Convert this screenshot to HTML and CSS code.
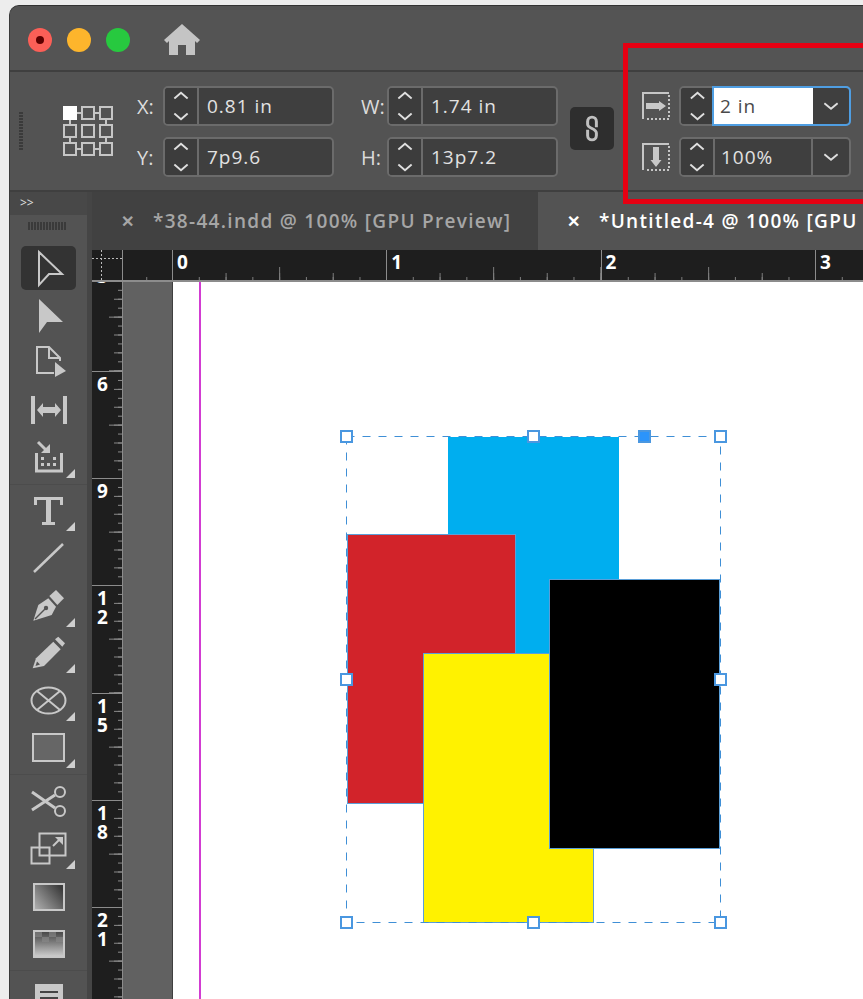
FILE: index.html
```html
<!DOCTYPE html>
<html lang="en">
  <head>
    <meta charset="UTF-8" />
    <meta name="viewport" content="width=device-width, initial-scale=1.0" />
    <title>Untitled-4 @ 100% [GPU Preview]</title>
    <link rel="stylesheet" href="styles.css">
  </head>
  <body>
    <svg class="defs" width="0" height="0">
      <symbol id="updown" viewBox="0 0 32 38">
        <path d="M9 11 L16 5 L23 11 M9 27 L16 33 L23 27" fill="none" stroke="#dedede" stroke-width="2" />
      </symbol>
      <symbol id="caret" viewBox="0 0 36 38">
        <path d="M11 16 L18 22 L25 16" fill="none" stroke="#dedede" stroke-width="2" />
      </symbol>
      <symbol id="corner" viewBox="0 0 9 9">
        <path d="M9 0 V9 H0 Z" fill="#cfcfcf" />
      </symbol>
    </svg>

    <div class="window">
      <header class="titlebar">
        <span class="light light-red"></span>
        <span class="light light-yellow"></span>
        <span class="light light-green"></span>
        <svg class="home" width="36" height="32" viewBox="0 0 36 32">
          <path d="M18 0 L36 16 L33 19 L31 17 V31 H22 V21 H14 V31 H5 V17 L3 19 L0 16 Z" fill="#c4c4c4" />
        </svg>
      </header>

      <!-- control panel -->
      <section class="controls">
        <div class="grip-v"></div>
        <svg class="proxy" width="50" height="50" viewBox="0 0 50 50">
          <g fill="none" stroke="#c6c6c6" stroke-width="2">
            <path d="M13 7 H19 M31 7 H37 M13 43 H19 M31 43 H37 M7 13 V19 M7 31 V37 M43 13 V19 M43 31 V37" />
            <rect x="19" y="1" width="12" height="12" />
            <rect x="37" y="1" width="12" height="12" />
            <rect x="1" y="19" width="12" height="12" />
            <rect x="19" y="19" width="12" height="12" />
            <rect x="37" y="19" width="12" height="12" />
            <rect x="1" y="37" width="12" height="12" />
            <rect x="19" y="37" width="12" height="12" />
            <rect x="37" y="37" width="12" height="12" />
          </g>
          <rect x="0" y="0" width="14" height="14" fill="#fff" />
        </svg>

        <div class="xform xform-pos">
          <label>X:</label>
          <div class="field"><svg class="stepper"><use href="#updown" /></svg><span class="value">0.81 in</span></div>
          <label>Y:</label>
          <div class="field"><svg class="stepper"><use href="#updown" /></svg><span class="value">7p9.6</span></div>
        </div>

        <div class="xform xform-size">
          <label>W:</label>
          <div class="field"><svg class="stepper"><use href="#updown" /></svg><span class="value">1.74 in</span></div>
          <label>H:</label>
          <div class="field"><svg class="stepper"><use href="#updown" /></svg><span class="value">13p7.2</span></div>
        </div>

        <button class="link-btn">
          <svg width="14" height="27" viewBox="0 0 16 30">
            <path d="M13 13.500 V7 A5 5 0 0 0 3 7 V10 C3 15 13 15 13 20 V23 A5 5 0 0 1 3 23 V16.500" fill="none" stroke="#c0c0c0" stroke-width="3.400" />
          </svg>
        </button>

        <div class="scale">
          <svg width="28" height="28" viewBox="0 0 28 28">
            <path d="M1 27 V1 H27" fill="none" stroke="#c6c6c6" stroke-width="2" />
            <path d="M27 3 V27 H3" fill="none" stroke="#c6c6c6" stroke-width="2" stroke-dasharray="2 2" />
            <path d="M4 11 H17 V9 L24 14 L17 19 V17 H4 Z" fill="#c8c8c8" />
          </svg>
          <div class="field combo combo-active"><svg class="stepper"><use href="#updown" /></svg><span class="value">2 in</span><svg class="drop"><use href="#caret" /></svg></div>
          <svg width="28" height="28" viewBox="0 0 28 28">
            <path d="M1 27 V1 H27" fill="none" stroke="#c6c6c6" stroke-width="2" />
            <path d="M27 3 V27 H3" fill="none" stroke="#c6c6c6" stroke-width="2" stroke-dasharray="2 2" />
            <path d="M11 4 H17 V17 H19.500 L14 24 L8.500 17 H11 Z" fill="#c8c8c8" />
          </svg>
          <div class="field combo"><svg class="stepper"><use href="#updown" /></svg><span class="value">100%</span><svg class="drop"><use href="#caret" /></svg></div>
        </div>
      </section>

      <div class="workspace">
        <!-- tools panel -->
        <aside class="tools">
          <div class="tools-head">&gt;&gt;</div>
          <div class="grip-h"></div>
          <div class="tool-group">
            <div class="tool tool-active">
              <svg width="60" height="47" viewBox="0 0 60 47"><path d="M20 8 L43 30 H30 L20 41 Z" fill="none" stroke="#c8c8c8" stroke-width="2" /></svg>
            </div>
            <div class="tool">
              <svg width="60" height="47" viewBox="0 0 60 47"><path d="M20 8 L44 31 H28 L20 42 Z" fill="#c8c8c8" /></svg>
            </div>
            <div class="tool">
              <svg width="60" height="47" viewBox="0 0 60 47">
                <path d="M35 35 H18 V9 H30 L41 20 V23 M30 9 V20 H41" fill="none" stroke="#c8c8c8" stroke-width="2" />
                <path d="M36 24 L47 33 L36 39 Z" fill="#c8c8c8" />
              </svg>
            </div>
            <div class="tool">
              <svg width="60" height="47" viewBox="0 0 60 47">
                <path d="M12 11 H16 V39 H12 Z M44 11 H48 V39 H44 Z M18 25 L24 18 V22 H36 V18 L42 25 L36 32 V28 H24 V32 Z" fill="#c8c8c8" />
              </svg>
            </div>
            <div class="tool">
              <svg width="60" height="47" viewBox="0 0 60 47">
                <path d="M17.500 21 V39 H42.500 V21" fill="none" stroke="#c8c8c8" stroke-width="3" />
                <path d="M19 10 L27 18" stroke="#c8c8c8" stroke-width="3" />
                <path d="M31 12 V21 H22 Z" fill="#c8c8c8" />
                <path d="M22 25 h3 v3 h-3 Z M34 25 h3 v3 h-3 Z M22 31 h3 v3 h-3 Z M28 31 h3 v3 h-3 Z M34 31 h3 v3 h-3 Z" fill="#c8c8c8" />
                <use href="#corner" x="47" y="37" width="9" height="9" />
              </svg>
            </div>
          </div>
          <div class="tool-group">
            <div class="tool">
              <svg width="60" height="47" viewBox="0 0 60 47">
                <path d="M15 10 H44 V18 H41 V13 H32 V35 H36 V38 H23 V35 H27 V13 H18 V18 H15 Z" fill="#c8c8c8" />
                <use href="#corner" x="47" y="35" width="9" height="9" />
              </svg>
            </div>
            <div class="tool">
              <svg width="60" height="47" viewBox="0 0 60 47"><path d="M44 10 L15 38" stroke="#c8c8c8" stroke-width="2.500" /></svg>
            </div>
            <div class="tool">
              <svg width="60" height="47" viewBox="0 0 60 47">
                <path d="M30.300 15 L37 9 L45 17.300 L38.300 24 Z" fill="#c8c8c8" />
                <path d="M14.300 39.700 L19.300 24 L29.300 17.300 L37 25.700 L32.700 34 Z" fill="#c8c8c8" />
                <path d="M16 38 L26 28" stroke="#535353" stroke-width="1.500" />
                <circle cx="27" cy="27" r="2.200" fill="#535353" />
                <use href="#corner" x="47" y="37" width="9" height="9" />
              </svg>
            </div>
            <div class="tool">
              <svg width="60" height="47" viewBox="0 0 60 47">
                <path d="M36 11.300 L39.300 8.700 L46 15.300 L43.300 18.700 Z" fill="#c8c8c8" />
                <path d="M13.700 40.300 L17 30.300 L34.300 13.700 L41.700 21.300 L25 38 Z" fill="#c8c8c8" />
                <path d="M16.500 38 L18 33.500 L21 36.500 Z" fill="#535353" />
                <use href="#corner" x="47" y="36" width="9" height="9" />
              </svg>
            </div>
            <div class="tool">
              <svg width="60" height="47" viewBox="0 0 60 47">
                <ellipse cx="29.500" cy="25.500" rx="17" ry="13" fill="none" stroke="#c8c8c8" stroke-width="2" />
                <path d="M18 16 L41 35 M41 16 L18 35" stroke="#c8c8c8" stroke-width="2" />
                <use href="#corner" x="47" y="37" width="9" height="9" />
              </svg>
            </div>
            <div class="tool">
              <svg width="60" height="47" viewBox="0 0 60 47">
                <rect x="14" y="12" width="31" height="27" fill="#666" stroke="#c8c8c8" stroke-width="2" />
                <use href="#corner" x="47" y="37" width="9" height="9" />
              </svg>
            </div>
          </div>
          <div class="tool-group">
            <div class="tool">
              <svg width="60" height="47" viewBox="0 0 60 47">
                <circle cx="41" cy="15" r="5" fill="none" stroke="#c8c8c8" stroke-width="2" />
                <circle cx="41" cy="34" r="5" fill="none" stroke="#c8c8c8" stroke-width="2" />
                <path d="M13 15 L36 31 M13 33 L36 18" stroke="#c8c8c8" stroke-width="3" />
              </svg>
            </div>
            <div class="tool">
              <svg width="60" height="47" viewBox="0 0 60 47">
                <rect x="20.500" y="9.500" width="26" height="22" fill="none" stroke="#c8c8c8" stroke-width="2" />
                <rect x="12.500" y="23.500" width="18" height="16" fill="none" stroke="#c8c8c8" stroke-width="2" />
                <path d="M34 22 L41 15" stroke="#c8c8c8" stroke-width="2" />
                <path d="M36 13 H44 V21 Z" fill="#c8c8c8" />
                <use href="#corner" x="47" y="36" width="9" height="9" />
              </svg>
            </div>
            <div class="tool">
              <svg width="60" height="47" viewBox="0 0 60 47">
                <defs>
                  <linearGradient id="gradswatch" x1="0" y1="1" x2="1" y2="0.300">
                    <stop offset="0" stop-color="#b4b4b4" />
                    <stop offset="1" stop-color="#3c3c3c" />
                  </linearGradient>
                </defs>
                <rect x="15" y="13" width="30" height="26" fill="url(#gradswatch)" stroke="#c8c8c8" stroke-width="2" />
              </svg>
            </div>
            <div class="tool">
              <svg width="60" height="47" viewBox="0 0 60 47">
                <defs>
                  <linearGradient id="featherswatch" x1="0" y1="0" x2="0" y2="1">
                    <stop offset="0" stop-color="#444" />
                    <stop offset="0.400" stop-color="#777" />
                    <stop offset="1" stop-color="#d0d0d0" />
                  </linearGradient>
                </defs>
                <rect x="15" y="13" width="30" height="26" fill="url(#featherswatch)" stroke="#c8c8c8" stroke-width="2" />
                <path d="M16 14 h7 v5 h-7 Z M30 14 h7 v5 h-7 Z M23 19 h7 v5 h-7 Z M37 19 h7 v5 h-7 Z" fill="#8a8a8a" opacity="0.600" />
              </svg>
            </div>
          </div>
          <div class="tool-group">
            <div class="tool">
              <svg width="60" height="47" viewBox="0 0 60 47">
                <rect x="16" y="11" width="28" height="30" fill="#c8c8c8" />
                <path d="M21 19 H39 M21 25 H39" stroke="#444" stroke-width="2" />
              </svg>
            </div>
          </div>
        </aside>

        <div class="doc-area">
          <nav class="tabs">
            <div class="tab">
              <span class="tab-close">✕</span><span class="tab-name">*38-44.indd @ 100% [GPU Preview]</span>
            </div>
            <div class="tab tab-active">
              <span class="tab-close">✕</span><span class="tab-name">*Untitled-4 @ 100% [GPU Preview]</span>
            </div>
          </nav>

          <div class="hruler">
            <div class="ruler-corner"></div>
            <div class="hcell hcell-lead"></div>
            <div class="hcell">0</div>
            <div class="hcell">1</div>
            <div class="hcell">2</div>
            <div class="hcell">3</div>
          </div>

          <div class="doc-body">
            <div class="vruler">
              <div class="vcell">3</div>
              <div class="vcell">6</div>
              <div class="vcell">9</div>
              <div class="vcell">1<br />2</div>
              <div class="vcell">1<br />5</div>
              <div class="vcell">1<br />8</div>
              <div class="vcell">2<br />1</div>
            </div>
            <div class="pasteboard"></div>

            <!-- the spread: frames sit at their own coordinates -->
            <div class="page">
              <div class="margin-guide"></div>
              <div class="frame frame-cyan"></div>
              <div class="frame frame-red"></div>
              <div class="frame frame-yellow"></div>
              <div class="frame frame-black"></div>
              <svg class="selection" width="376" height="488" viewBox="0 0 376 488">
                <rect x="0.500" y="0.500" width="374" height="486" fill="none" stroke="#3f8fd6" stroke-width="1" stroke-dasharray="8 8" />
              </svg>
              <span class="handle h-tl"></span>
              <span class="handle h-tc"></span>
              <span class="handle h-tr"></span>
              <span class="handle h-ml"></span>
              <span class="handle h-mr"></span>
              <span class="handle h-bl"></span>
              <span class="handle h-bc"></span>
              <span class="handle h-br"></span>
              <span class="handle h-port"></span>
            </div>
          </div>
        </div>
      </div>
    </div>

    <div class="callout"></div>
  </body>
</html>
```

FILE: styles.css
```css
html,
body {
  margin: 0;
  padding: 0;
  height: 999px;
  overflow: hidden;
}
body {
  position: relative;
  background-color: #ededed;
  font-family: "Open Sans", Arial, sans-serif;
  color: #e6e6e6;
}
.defs {
  position: absolute;
}

.window {
  margin: 5px 0 0 9px;
  height: 994px;
  display: flex;
  flex-direction: column;
  background-color: #535353;
  border-top: 1px solid #333;
  border-left: 1px solid #3a3a3a;
  border-top-left-radius: 10px;
  overflow: hidden;
  box-sizing: border-box;
}

/* title bar */
.titlebar {
  flex: none;
  height: 66px;
  display: flex;
  align-items: center;
  box-sizing: border-box;
  padding: 4px 0 0 18px;
  gap: 15px;
  background-color: #545454;
  border-bottom: 2px solid #3f3f3f;
}
.light {
  width: 24px;
  height: 24px;
  border-radius: 50%;
  position: relative;
}
.light-red {
  background-color: #fc5f57;
}
.light-red::after {
  content: "";
  position: absolute;
  left: 8px;
  top: 8px;
  width: 8px;
  height: 8px;
  border-radius: 50%;
  background-color: #5e0000;
}
.light-yellow {
  background-color: #fdb52c;
}
.light-green {
  background-color: #27c93f;
}
.home {
  margin-left: 19px;
}

/* control panel */
.controls {
  flex: none;
  height: 120px;
  display: flex;
  box-sizing: border-box;
  padding-top: 14px;
  background-color: #535353;
  border-bottom: 2px solid #3f3f3f;
}
.grip-v {
  width: 4px;
  height: 38px;
  margin: 26px 0 0 9px;
  background: repeating-linear-gradient(to bottom, #3a3a3a 0 2px, transparent 2px 3px);
}
.proxy {
  margin: 20px 0 0 40px;
}
.xform {
  display: grid;
  grid-template-columns: 26px 171px;
  grid-auto-rows: 40px;
  row-gap: 11px;
  align-items: center;
}
.xform-pos {
  margin-left: 24px;
}
.xform-size {
  margin-left: 27px;
}
.xform label {
  font-size: 20px;
  color: #dcdcdc;
}
.field {
  height: 40px;
  display: flex;
  box-sizing: border-box;
  background-color: #3f3f3f;
  border: 2px solid #6b6b6b;
  border-radius: 5px;
  overflow: hidden;
}
.stepper {
  flex: none;
  width: 32px;
  height: 36px;
  border-right: 2px solid #6b6b6b;
  background-color: #3c3c3c;
}
.value {
  flex: 1;
  padding-left: 8px;
  font-size: 19px;
  line-height: 36px;
  letter-spacing: 1px;
  color: #e2e2e2;
  white-space: nowrap;
}
.link-btn {
  width: 44px;
  height: 43px;
  margin: 21px 0 0 12px;
  padding: 0;
  display: flex;
  align-items: center;
  justify-content: center;
  background-color: #2e2e2e;
  border: 0;
  border-radius: 5px;
}
.scale {
  display: grid;
  grid-template-columns: 28px 172px;
  grid-auto-rows: 40px;
  row-gap: 11px;
  column-gap: 9px;
  align-items: center;
  margin-left: 28px;
}
.combo .value {
  padding-left: 6px;
  border-right: 2px solid #6b6b6b;
}
.combo .drop {
  flex: none;
  width: 36px;
  height: 36px;
}
.combo-active {
  position: relative;
  overflow: visible;
}
.combo-active::after {
  content: "";
  position: absolute;
  left: 31px;
  top: -2px;
  right: -2px;
  bottom: -2px;
  border: 2px solid #4f9ee2;
  border-radius: 0 5px 5px 0;
}
.combo-active .stepper {
  border-right: 0;
  width: 33px;
  border-radius: 3px 0 0 3px;
}
.combo-active .value {
  background-color: #fff;
  color: #4a4a4a;
  border-right: 0;
}

/* lower part of the window */
.workspace {
  flex: 1;
  min-height: 0;
  display: flex;
}
.tools {
  flex: none;
  width: 77px;
  background-color: #535353;
  border-right: 5px solid #454545;
  overflow: hidden;
}
.tools-head {
  height: 23px;
  padding-left: 10px;
  box-sizing: border-box;
  font-size: 12px;
  line-height: 21px;
  background-color: #484848;
  color: #e0e0e0;
}
.grip-h {
  height: 29px;
  position: relative;
}
.grip-h::after {
  content: "";
  position: absolute;
  left: 18px;
  top: 7px;
  width: 38px;
  height: 8px;
  background: repeating-linear-gradient(to right, #3a3a3a 0 2px, transparent 2px 3px);
}
.tool-group {
  padding-bottom: 5px;
  margin-bottom: 2px;
  border-bottom: 1px solid #4c4c4c;
}
.tool {
  height: 47px;
  display: flex;
  justify-content: center;
  position: relative;
}
.tool svg {
  position: relative;
}
.tool-active::before {
  content: "";
  position: absolute;
  left: 11px;
  right: 11px;
  top: 2px;
  bottom: 1px;
  background-color: #333;
  border-radius: 5px;
}

.doc-area {
  flex: 1;
  min-width: 0;
  display: flex;
  flex-direction: column;
}
.tabs {
  flex: none;
  height: 58px;
  display: flex;
  background-color: #414141;
}
.tab {
  display: flex;
  align-items: center;
  flex: none;
  width: 446px;
  box-sizing: border-box;
  padding-left: 29px;
  font-size: 19px;
  font-weight: 600;
  color: #a6a6a6;
  white-space: nowrap;
  overflow: hidden;
}
.tab-active {
  flex: 1;
  min-width: 0;
  background-color: #535353;
  color: #fff;
}
.tab-close {
  flex: none;
  width: 32px;
  font-size: 16px;
}
.tab-name {
  flex: none;
  letter-spacing: 1.3px;
}

/* rulers */
.hruler {
  flex: none;
  height: 30px;
  display: flex;
  background-color: #1e1e1e;
  border-bottom: 2px solid #8c8c8c;
  box-sizing: content-box;
  overflow: hidden;
}
.ruler-corner {
  flex: none;
  width: 30px;
  border-right: 1px solid #8c8c8c;
  background:
    linear-gradient(to right, #bbb 50%, transparent 50%) 0 8px / 4px 1px repeat-x,
    linear-gradient(to bottom, #bbb 50%, transparent 50%) 9px 0 / 1px 4px repeat-y;
  background-color: #1e1e1e;
}
.hcell {
  flex: none;
  width: 214.3px;
  box-sizing: border-box;
  padding-left: 4px;
  font-size: 19px;
  font-weight: 700;
  line-height: 25px;
  color: #fff;
  border-left: 1px solid #8c8c8c;
  background-image:
    linear-gradient(to right, #7d7d7d 1px, transparent 1px),
    linear-gradient(to right, #7d7d7d 1px, transparent 1px),
    linear-gradient(to right, #7d7d7d 1px, transparent 1px);
  background-size: 26.79px 3px, 53.58px 7px, 107.15px 13px;
  background-repeat: repeat-x;
  background-position: -1px bottom;
}
.hcell-lead {
  width: 49px;
  padding: 0;
  border-left: 0;
  background-position: right -1px bottom;
}

.doc-body {
  flex: 1;
  min-height: 0;
  display: flex;
}
.vruler {
  flex: none;
  width: 31px;
  box-sizing: border-box;
  background-color: #1e1e1e;
  border-right: 1px solid #8c8c8c;
  overflow: hidden;
}
.vcell {
  height: 107.3px;
  box-sizing: border-box;
  padding: 3px 0 0 5px;
  font-size: 19px;
  font-weight: 700;
  line-height: 19px;
  color: #fff;
  border-top: 1px solid #8c8c8c;
  background-image:
    linear-gradient(to bottom, #8a8a8a 1px, transparent 1px),
    linear-gradient(to bottom, #8a8a8a 1px, transparent 1px),
    linear-gradient(to bottom, #8a8a8a 1px, transparent 1px);
  background-size: 4px 8.94px, 8px 17.88px, 13px 53.65px;
  background-repeat: repeat-y;
  background-position: right -1px;
}
.vcell:first-child {
  margin-top: -18.7px;
}
.pasteboard {
  flex: none;
  width: 49px;
  background-color: #616161;
  border-right: 1px solid #3f3f3f;
}

/* page with placed frames */
.page {
  flex: 1;
  position: relative;
  background-color: #fff;
  overflow: hidden;
}
.margin-guide {
  position: absolute;
  left: 25.5px;
  top: 0;
  bottom: 0;
  width: 2px;
  background-color: #d23cd2;
}
.frame {
  position: absolute;
  box-sizing: border-box;
  border: 1px solid #5b9fd8;
}
.frame-cyan {
  left: 275px;
  top: 155px;
  width: 171px;
  height: 269px;
  background-color: #00aeef;
  border-color: #00aeef;
}
.frame-red {
  left: 174px;
  top: 252px;
  width: 169px;
  height: 270px;
  background-color: #d2232a;
}
.frame-yellow {
  left: 250px;
  top: 371px;
  width: 171px;
  height: 270px;
  background-color: #fff200;
}
.frame-black {
  left: 376px;
  top: 297px;
  width: 171px;
  height: 270px;
  background-color: #000;
}
.selection {
  position: absolute;
  left: 173px;
  top: 154px;
}
.handle {
  position: absolute;
  width: 13px;
  height: 13px;
  box-sizing: border-box;
  background-color: #fff;
  border: 2px solid #4a97e0;
}
.h-tl { left: 167px; top: 148px; }
.h-tc { left: 354px; top: 148px; }
.h-tr { left: 541px; top: 148px; }
.h-ml { left: 167px; top: 391px; }
.h-mr { left: 541px; top: 391px; }
.h-bl { left: 167px; top: 634px; }
.h-bc { left: 354px; top: 634px; }
.h-br { left: 541px; top: 634px; }
.h-port {
  left: 465px;
  top: 148px;
  background-color: #2b94fb;
}

/* red marker drawn over the panel */
.callout {
  position: absolute;
  left: 623px;
  top: 43px;
  width: 260px;
  height: 161px;
  box-sizing: border-box;
  border: 5px solid #e60012;
}
```
